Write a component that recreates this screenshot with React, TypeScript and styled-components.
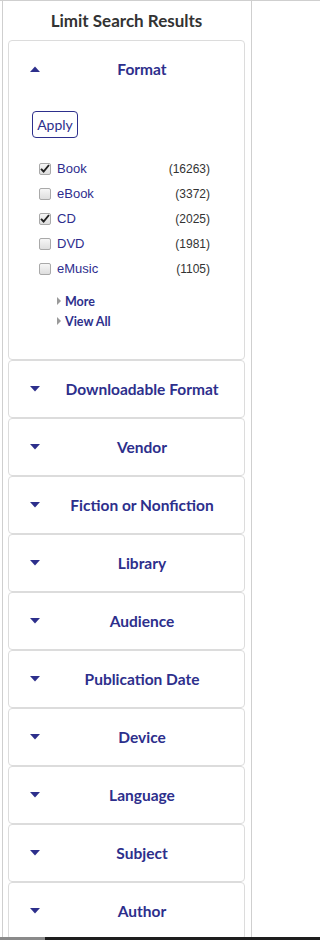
import React from 'react';
import styled, { createGlobalStyle } from 'styled-components';

const GlobalStyle = createGlobalStyle`
  html, body {
    margin: 0;
    padding: 0;
    background: #fff;
  }
  body {
    border-top: 1px solid #cfcfcf;
    font-family: Lato, "Liberation Sans", sans-serif;
  }
`;

const NAVY = '#2d2f8c';

const Panel = styled.aside`
  margin-left: 2px;
  width: 250px;
  border-left: 1px solid #cfcfcf;
  border-right: 1px solid #cfcfcf;
  padding: 0 6px 0 5px;
  box-sizing: border-box;
  min-height: 939px;
`;

const Title = styled.h2`
  margin: 0;
  height: 39px;
  display: flex;
  align-items: center;
  justify-content: center;
  font-size: 17px;
  font-weight: 700;
  color: #333;
`;

const Card = styled.section`
  border: 1px solid #dcdcdc;
  border-radius: 4px;
  background: #fff;
`;

const Header = styled.button`
  all: unset;
  box-sizing: border-box;
  display: flex;
  align-items: center;
  width: 100%;
  height: 56px;
  padding-left: 21px;
  cursor: pointer;
`;

const HeaderText = styled.span`
  flex: 1;
  text-align: center;
  font-size: 15.5px;
  font-weight: 700;
  color: ${NAVY};
`;

const Caret = ({ open }: { open?: boolean }) => (
  <svg width="10" height="6" viewBox="0 0 10 6" style={{ display: 'block' }}>
    {open ? (
      <path d="M0 6 L5 0.5 L10 6 Z" fill={NAVY} />
    ) : (
      <path d="M0 0 L10 0 L5 5.5 Z" fill={NAVY} />
    )}
  </svg>
);

const Body = styled.div`
  padding: 14px 34px 28px 23px;
`;

const ApplyButton = styled.button`
  box-sizing: border-box;
  height: 27px;
  width: 46px;
  padding: 0;
  border: 1px solid ${NAVY};
  border-radius: 4px;
  background: #fff;
  color: ${NAVY};
  font-family: Lato, "Liberation Sans", sans-serif;
  font-size: 14px;
`;

const OptionList = styled.ul`
  list-style: none;
  margin: 18px 0 10px 7px;
  padding: 0;
`;

const Option = styled.li`
  display: flex;
  align-items: center;
  height: 25px;
  font-family: "Liberation Sans", Arial, sans-serif;
`;

const Box = styled.span<{ $checked?: boolean }>`
  box-sizing: border-box;
  width: 12px;
  height: 12px;
  margin-right: 6px;
  border: 1px solid #a9a9a9;
  border-radius: 2px;
  background: linear-gradient(#f6f6f6, #dedede);
  display: flex;
  align-items: center;
  justify-content: center;
`;

const Label = styled.span`
  flex: 1;
  font-size: 13px;
  color: #2e2d8e;
`;

const Count = styled.span`
  font-size: 12px;
  color: #333;
`;

const LinkList = styled.div`
  display: flex;
  flex-direction: column;
  padding-left: 25px;
`;

const MoreLink = styled.a`
  display: flex;
  align-items: center;
  height: 20px;
  font-size: 12.5px;
  font-weight: 700;
  color: ${NAVY};
  text-decoration: none;
  cursor: pointer;
`;

const SideArrow = styled.span`
  width: 0;
  height: 0;
  border-top: 4px solid transparent;
  border-bottom: 4px solid transparent;
  border-left: 4px solid #9a9a9a;
  margin-right: 4px;
`;

const ScrollBar = styled.div`
  position: fixed;
  left: 0;
  right: 0;
  bottom: 0;
  height: 3px;
  background: linear-gradient(to right, #8a8a8a 0 45px, #1e1e1e 45px);
`;

const Check = () => (
  <svg width="10" height="9" viewBox="0 0 10 9">
    <path d="M1 4.8 L3.6 7.5 L9 1" stroke="#222" strokeWidth="1.9" fill="none" />
  </svg>
);

const formats = [
  { name: 'Book', count: 16263, checked: true },
  { name: 'eBook', count: 3372 },
  { name: 'CD', count: 2025, checked: true },
  { name: 'DVD', count: 1981 },
  { name: 'eMusic', count: 1105 },
];

const collapsed = [
  'Downloadable Format',
  'Vendor',
  'Fiction or Nonfiction',
  'Library',
  'Audience',
  'Publication Date',
  'Device',
  'Language',
  'Subject',
  'Author',
];

export default function App() {
  return (
    <>
      <GlobalStyle />
      <Panel>
        <Title>Limit Search Results</Title>
        <Card>
          <Header>
            <Caret open />
            <HeaderText>Format</HeaderText>
          </Header>
          <Body>
            <ApplyButton>Apply</ApplyButton>
            <OptionList>
              {formats.map((f) => (
                <Option key={f.name}>
                  <Box $checked={f.checked}>{f.checked ? <Check /> : null}</Box>
                  <Label>{f.name}</Label>
                  <Count>({f.count})</Count>
                </Option>
              ))}
            </OptionList>
            <LinkList>
              <MoreLink>
                <SideArrow />
                More
              </MoreLink>
              <MoreLink>
                <SideArrow />
                View All
              </MoreLink>
            </LinkList>
          </Body>
        </Card>
        {collapsed.map((name) => (
          <Card key={name}>
            <Header>
              <Caret />
              <HeaderText>{name}</HeaderText>
            </Header>
          </Card>
        ))}
      </Panel>
      <ScrollBar />
    </>
  );
}
